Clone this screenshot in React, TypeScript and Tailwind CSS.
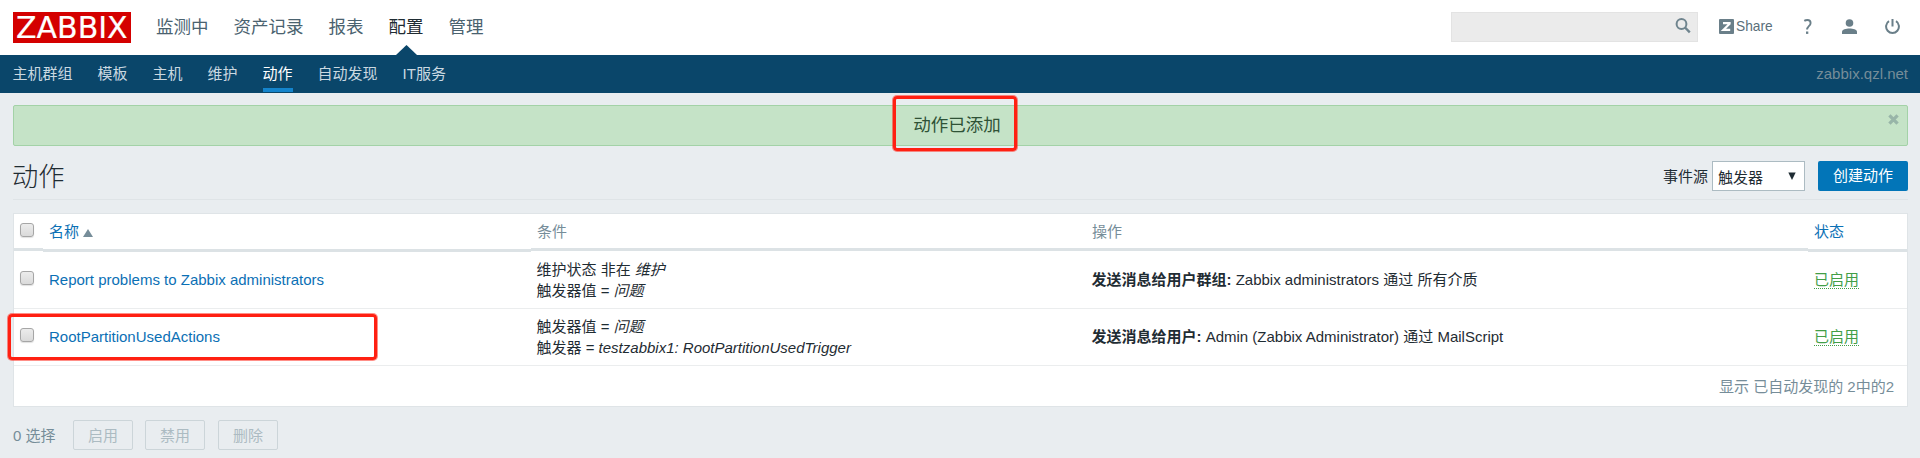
import React from 'react';

const menu = ['监测中', '资产记录', '报表', '配置', '管理'];
const submenu = ['主机群组', '模板', '主机', '维护', '动作', '自动发现', 'IT服务'];

function Checkbox() {
  return (
    <span className="block h-[14px] w-[14px] rounded-[3px] border border-[#a6a6a6] bg-linear-to-b from-[#ececec] to-[#dadada] shadow-[0_1px_1px_rgba(0,0,0,0.12)]" />
  );
}

function TopBar() {
  return (
    <header className="flex h-[55px] items-start bg-white pl-[13px]">
      <div className="mt-3 h-[31px] w-[118px] bg-[#d40000] pl-[3px] font-['DejaVu_Sans'] text-[30px] leading-[31px] font-normal text-white [-webkit-text-stroke:0.2px_#fff]">
        ZABBIX
      </div>
      <nav className="ml-[25px] flex gap-[25px] text-[17.5px] leading-[54px] text-[#4a626f]">
        {menu.map((m) => (
          <a key={m} className={m === '配置' ? 'relative text-[#1f2c33]' : ''}>
            {m}
            {m === '配置' && (
              <svg className="absolute top-[45px] left-[7px]" width="21" height="10" viewBox="0 0 21 10">
                <path d="M0 10L10.5 0 21 10z" fill="#0a466a" />
              </svg>
            )}
          </a>
        ))}
      </nav>
      <div className="mt-3 ml-auto flex h-[30px] w-[247px] items-start justify-end border border-[#e3e3e3] bg-[#ebebeb] pt-[5px] pr-[6px]">
        <svg width="16" height="16" viewBox="0 0 16 16" fill="none" stroke="#6f848e">
          <circle cx="6.5" cy="6" r="4.9" strokeWidth="2" />
          <path d="M10 9.5l4.8 4.8" strokeWidth="2.4" />
        </svg>
      </div>
      <div className="mt-[19px] ml-[21px] flex h-[15px] w-[201px] text-[#6a7f89]">
        <svg width="15" height="15" viewBox="0 0 15 15">
          <rect width="15" height="15" rx="1" fill="#6a7f89" />
          <path d="M4 4.1h6.6v.6L4.3 10.9h6.9" fill="none" stroke="#fff" strokeWidth="2.1" />
        </svg>
        <span className="ml-[2px] w-[36px] text-[13.75px] leading-[15px] text-[#5a6f7a]">Share</span>
        <svg className="ml-[31px]" width="10" height="16" viewBox="0 0 10 16">
          <path d="M1.3 1.9C2.3 1.2 3.3 1 4.4 1c2 0 3.2 1.1 3.2 2.9 0 3.2-3.5 3.3-3.5 6.6" fill="none" stroke="#6a7f89" strokeWidth="1.9" />
          <rect x="3" y="12.5" width="2.3" height="2.4" fill="#6a7f89" />
        </svg>
        <svg className="ml-[29px]" width="15" height="15" viewBox="0 0 15 15" fill="#6a7f89">
          <circle cx="7.5" cy="4" r="3.8" />
          <path d="M0 15v-2.2C0 10.4 4 9.4 7.5 9.4s7.500 1 7.500 3.400V15z" />
        </svg>
        <svg className="ml-[28px]" width="15" height="15" viewBox="0 0 15 15" fill="none" stroke="#6a7f89" strokeWidth="2">
          <path d="M7.500 0v7.500M4 2.200a6.400 6.400 0 1 0 7 0" />
        </svg>
      </div>
    </header>
  );
}

function SubBar() {
  return (
    <nav className="flex h-[38px] gap-[25px] bg-[#0a466a] pr-3 pl-[12.5px] text-[15px] leading-[37px] text-[#cbd9e1]">
      {submenu.map((m) => (
        <a key={m} className={m === '动作' ? 'h-[37px] border-b-4 border-[#1484cc] text-white' : 'h-[37px]'}>
          {m}
        </a>
      ))}
      <span className="ml-auto text-[#768d99]">zabbix.qzl.net</span>
    </nav>
  );
}

const th = 'border-b-[3px] border-[#dce2e5] pl-[6px]';
const grid = 'grid grid-cols-[29px_488px_555px_722px_99px]';

function Row({ name, conditions, operation }: { name: string; conditions: React.ReactNode; operation: React.ReactNode }) {
  return (
    <div className={`${grid} h-[57px] border-b border-[#ebedee]`}>
      <div className="pt-[19px] pl-[6px]"><Checkbox /></div>
      <div className="pl-[6px] leading-[56px] text-[#0b70b5]">{name}</div>
      <div className="pt-[7px] pl-[5.5px] leading-[21px]">{conditions}</div>
      <div className="pl-[5.5px] leading-[56px]">{operation}</div>
      <div className="pt-[17px] pl-[6px]">
        <span className="block h-[20px] w-[45px] border-b border-dotted border-[#429e47] leading-[21px] text-[#429e47]">已启用</span>
      </div>
    </div>
  );
}

export default function App() {
  return (
    <div className="relative h-[458px] w-[1920px] overflow-hidden bg-[#e9edf0] font-['Liberation_Sans','Noto_Sans_CJK_SC',sans-serif] text-[15px] text-[#1f2c33]">
      <TopBar />
      <SubBar />
      <main className="pr-3 pl-[13px]">
        <div className="relative mt-3 h-[41px] rounded-[2px] border border-[#a3d2a7] bg-[#c5e3c7] pr-[7px] text-center text-[17.5px] leading-[38px] text-[#2f5236]">
          动作已添加
          <svg className="absolute top-[8px] right-[8px]" width="11" height="11" viewBox="0 0 10 10">
            <path d="M1.300 1.300l7.400 7.400M8.700 1.300L1.300 8.700" stroke="#98b5a8" strokeWidth="3" />
          </svg>
        </div>
        <div className="flex h-[54px] items-start border-b border-[#dfe4e7] pt-[15px]">
          <h1 className="-ml-px text-[26.25px] leading-[32px] font-light">动作</h1>
          <span className="ml-auto leading-[31px]">事件源</span>
          <div className="ml-1 flex h-[30px] w-[93px] justify-between border border-[#acbbc2] bg-white pr-2 pl-[5px] leading-[31px]">
            触发器
            <svg className="mt-[10px]" width="8" height="8" viewBox="0 0 8 8">
              <path d="M.3.500h7.400L4 8z" fill="#1f2c33" />
            </svg>
          </div>
          <button className="ml-[13px] h-[30px] w-[90px] rounded-[2px] bg-[#0275b8] leading-[30px] text-white">创建动作</button>
        </div>

        <section className="mt-[13px] h-[194px] border border-[#dfe4e7] bg-white">
          <div className={`${grid} h-[38px] items-start leading-[35px] text-[#768d99]`}>
            <div className="h-[37px] border-b-[3px] border-[#dce2e5] pt-[9px] pl-[6px]"><Checkbox /></div>
            <div className={`${th} flex h-[38px] text-[#0b70b5]`}>
              名称
              <svg className="mt-[15px] ml-[4px]" width="10" height="8" viewBox="0 0 10 8">
                <path d="M0 8L5 0l5 8z" fill="#768d99" />
              </svg>
            </div>
            <div className={`${th} h-[37px]`}>条件</div>
            <div className={`${th} h-[37px]`}>操作</div>
            <div className={`${th} h-[38px] text-[#0b70b5]`}>状态</div>
          </div>
          <Row
            name="Report problems to Zabbix administrators"
            conditions={<>维护状态 非在 <em>维护</em><br />触发器值 = <em>问题</em></>}
            operation={<><b className="font-bold">发送消息给用户群组:</b> Zabbix administrators 通过 所有介质</>}
          />
          <Row
            name="RootPartitionUsedActions"
            conditions={<>触发器值 = <em>问题</em><br />触发器 = <em>testzabbix1: RootPartitionUsedTrigger</em></>}
            operation={<><b className="font-bold">发送消息给用户:</b> Admin (Zabbix Administrator) 通过 MailScript</>}
          />
          <div className="pr-[13px] text-right leading-[41px] text-[#768d99]">显示 已自动发现的 2中的2</div>
        </section>

        <div className="mt-[13px] flex leading-[30px] text-[#768d99]">
          <span className="w-[60px] leading-[31px]">0 选择</span>
          {['启用', '禁用', '删除'].map((b) => (
            <button key={b} className="mr-3 h-[30px] w-[60px] rounded-[2px] border border-[#ccd5d9] leading-[29px] text-[#acbbc2] last:ml-px">{b}</button>
          ))}
        </div>
      </main>
      <div className="absolute top-[96px] left-[893px] h-[55px] w-[124px] rounded-[4px] border-[3px] border-[#ff2012] shadow-[0_0_0_1px_rgba(255,32,18,0.5)]" />
      <div className="absolute top-[314px] left-[8px] h-[46px] w-[369px] rounded-[4px] border-[3px] border-[#ff2012] shadow-[0_0_0_1px_rgba(255,32,18,0.5)]" />
    </div>
  );
}
